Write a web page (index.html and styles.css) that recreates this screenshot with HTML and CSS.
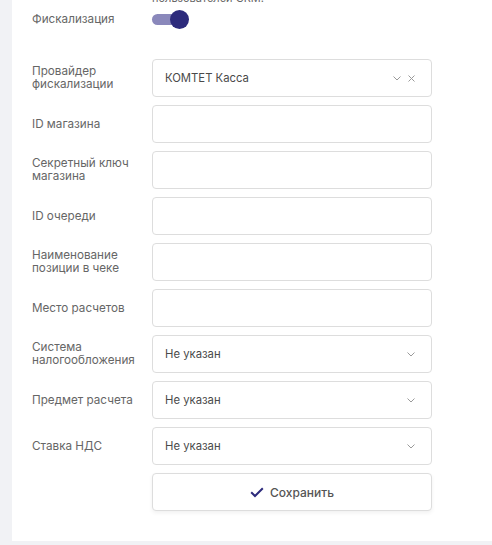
FILE: index.html
```html
<!DOCTYPE html>
<html lang="ru">
<head>
<meta charset="utf-8">
<link rel="stylesheet" href="styles.css">
</head>
<body>
<div class="card">
  <div class="note">пользователей CRM.</div>
  <div class="row toggle-row">
    <div class="label">Фискализация</div>
    <div class="switch"><span class="knob"></span></div>
  </div>
  <div class="fields">
    <div class="row">
      <div class="label">Провайдер фискализации</div>
      <div class="field select">
        <span class="value">КОМТЕТ Касса</span>
        <span class="icons">
          <svg class="chev" width="8" height="5" viewBox="0 0 8 5"><path d="M0.5 0.5 L4 4 L7.5 0.5" fill="none" stroke="#9a9a9a" stroke-width="1"/></svg>
          <svg class="clear" width="7" height="7" viewBox="0 0 7 7"><path d="M0.5 0.5 L6.5 6.5 M6.5 0.5 L0.5 6.5" fill="none" stroke="#9a9a9a" stroke-width="1"/></svg>
        </span>
      </div>
    </div>
    <div class="row">
      <div class="label">ID магазина</div>
      <div class="field"></div>
    </div>
    <div class="row">
      <div class="label">Секретный ключ магазина</div>
      <div class="field"></div>
    </div>
    <div class="row">
      <div class="label">ID очереди</div>
      <div class="field"></div>
    </div>
    <div class="row">
      <div class="label">Наименование позиции в чеке</div>
      <div class="field"></div>
    </div>
    <div class="row">
      <div class="label">Место расчетов</div>
      <div class="field"></div>
    </div>
    <div class="row">
      <div class="label">Система налогообложения</div>
      <div class="field select">
        <span class="value">Не указан</span>
        <span class="icons"><svg class="chev" width="8" height="5" viewBox="0 0 8 5"><path d="M0.5 0.5 L4 4 L7.5 0.5" fill="none" stroke="#9a9a9a" stroke-width="1"/></svg></span>
      </div>
    </div>
    <div class="row">
      <div class="label">Предмет расчета</div>
      <div class="field select">
        <span class="value">Не указан</span>
        <span class="icons"><svg class="chev" width="8" height="5" viewBox="0 0 8 5"><path d="M0.5 0.5 L4 4 L7.5 0.5" fill="none" stroke="#9a9a9a" stroke-width="1"/></svg></span>
      </div>
    </div>
    <div class="row">
      <div class="label">Ставка НДС</div>
      <div class="field select">
        <span class="value">Не указан</span>
        <span class="icons"><svg class="chev" width="8" height="5" viewBox="0 0 8 5"><path d="M0.5 0.5 L4 4 L7.5 0.5" fill="none" stroke="#9a9a9a" stroke-width="1"/></svg></span>
      </div>
    </div>
    <div class="row">
      <div class="label"></div>
      <button class="save">
        <svg width="14" height="11" viewBox="0 0 14 11"><path d="M1.2 5.2 L5 9 L12.8 1.2" fill="none" stroke="#2d2b7c" stroke-width="2"/></svg>
        <span>Сохранить</span>
      </button>
    </div>
  </div>
</div>
</body>
</html>
```
FILE: styles.css
```css
html, body {
  margin: 0;
  padding: 0;
}
body {
  background: #f1f2f5;
  font-family: "Inter", "Noto Sans", sans-serif;
  color: #555;
  width: 492px;
  height: 545px;
  overflow: hidden;
}
.card {
  margin-left: 12px;
  background: #fff;
  height: 541px;
  padding-left: 20px;
  overflow: hidden;
  box-sizing: border-box;
}
.note {
  margin-left: 120px;
  margin-top: -8px;
  font-size: 11px;
  line-height: 13px;
  color: #666;
}
.row {
  display: grid;
  grid-template-columns: 120px 280px;
  align-items: center;
}
.label {
  font-size: 11.7px;
  line-height: 13px;
  color: #666;
  padding-right: 10px;
}
.toggle-row {
  height: 24px;
  margin-top: 2px;
}
.switch {
  position: relative;
  width: 36px;
  height: 11px;
  border-radius: 6px;
  background: #8a88bb;
}
.knob {
  position: absolute;
  right: -1px;
  top: -4px;
  width: 19px;
  height: 19px;
  border-radius: 50%;
  background: #2d2b7c;
}
.fields {
  margin-top: 28px;
  display: flex;
  flex-direction: column;
  gap: 8px;
}
.field {
  height: 38px;
  box-sizing: border-box;
  border: 1px solid #dddddd;
  border-radius: 4px;
  background: #fff;
}
.select {
  display: flex;
  align-items: center;
  justify-content: space-between;
  padding: 0 16px 0 12px;
}
.value {
  font-size: 11.3px;
  color: #4a4a4a;
}
.icons {
  display: flex;
  align-items: center;
  gap: 7px;
}
.save {
  height: 38px;
  border: 1px solid #dddddd;
  border-radius: 4px;
  background: #fff;
  box-shadow: 0 2px 4px rgba(0,0,0,0.06);
  display: flex;
  align-items: center;
  justify-content: center;
  gap: 6px;
  font-family: inherit;
  font-size: 12px;
  font-weight: 500;
  color: #555;
  padding: 0;
  cursor: pointer;
}
```
